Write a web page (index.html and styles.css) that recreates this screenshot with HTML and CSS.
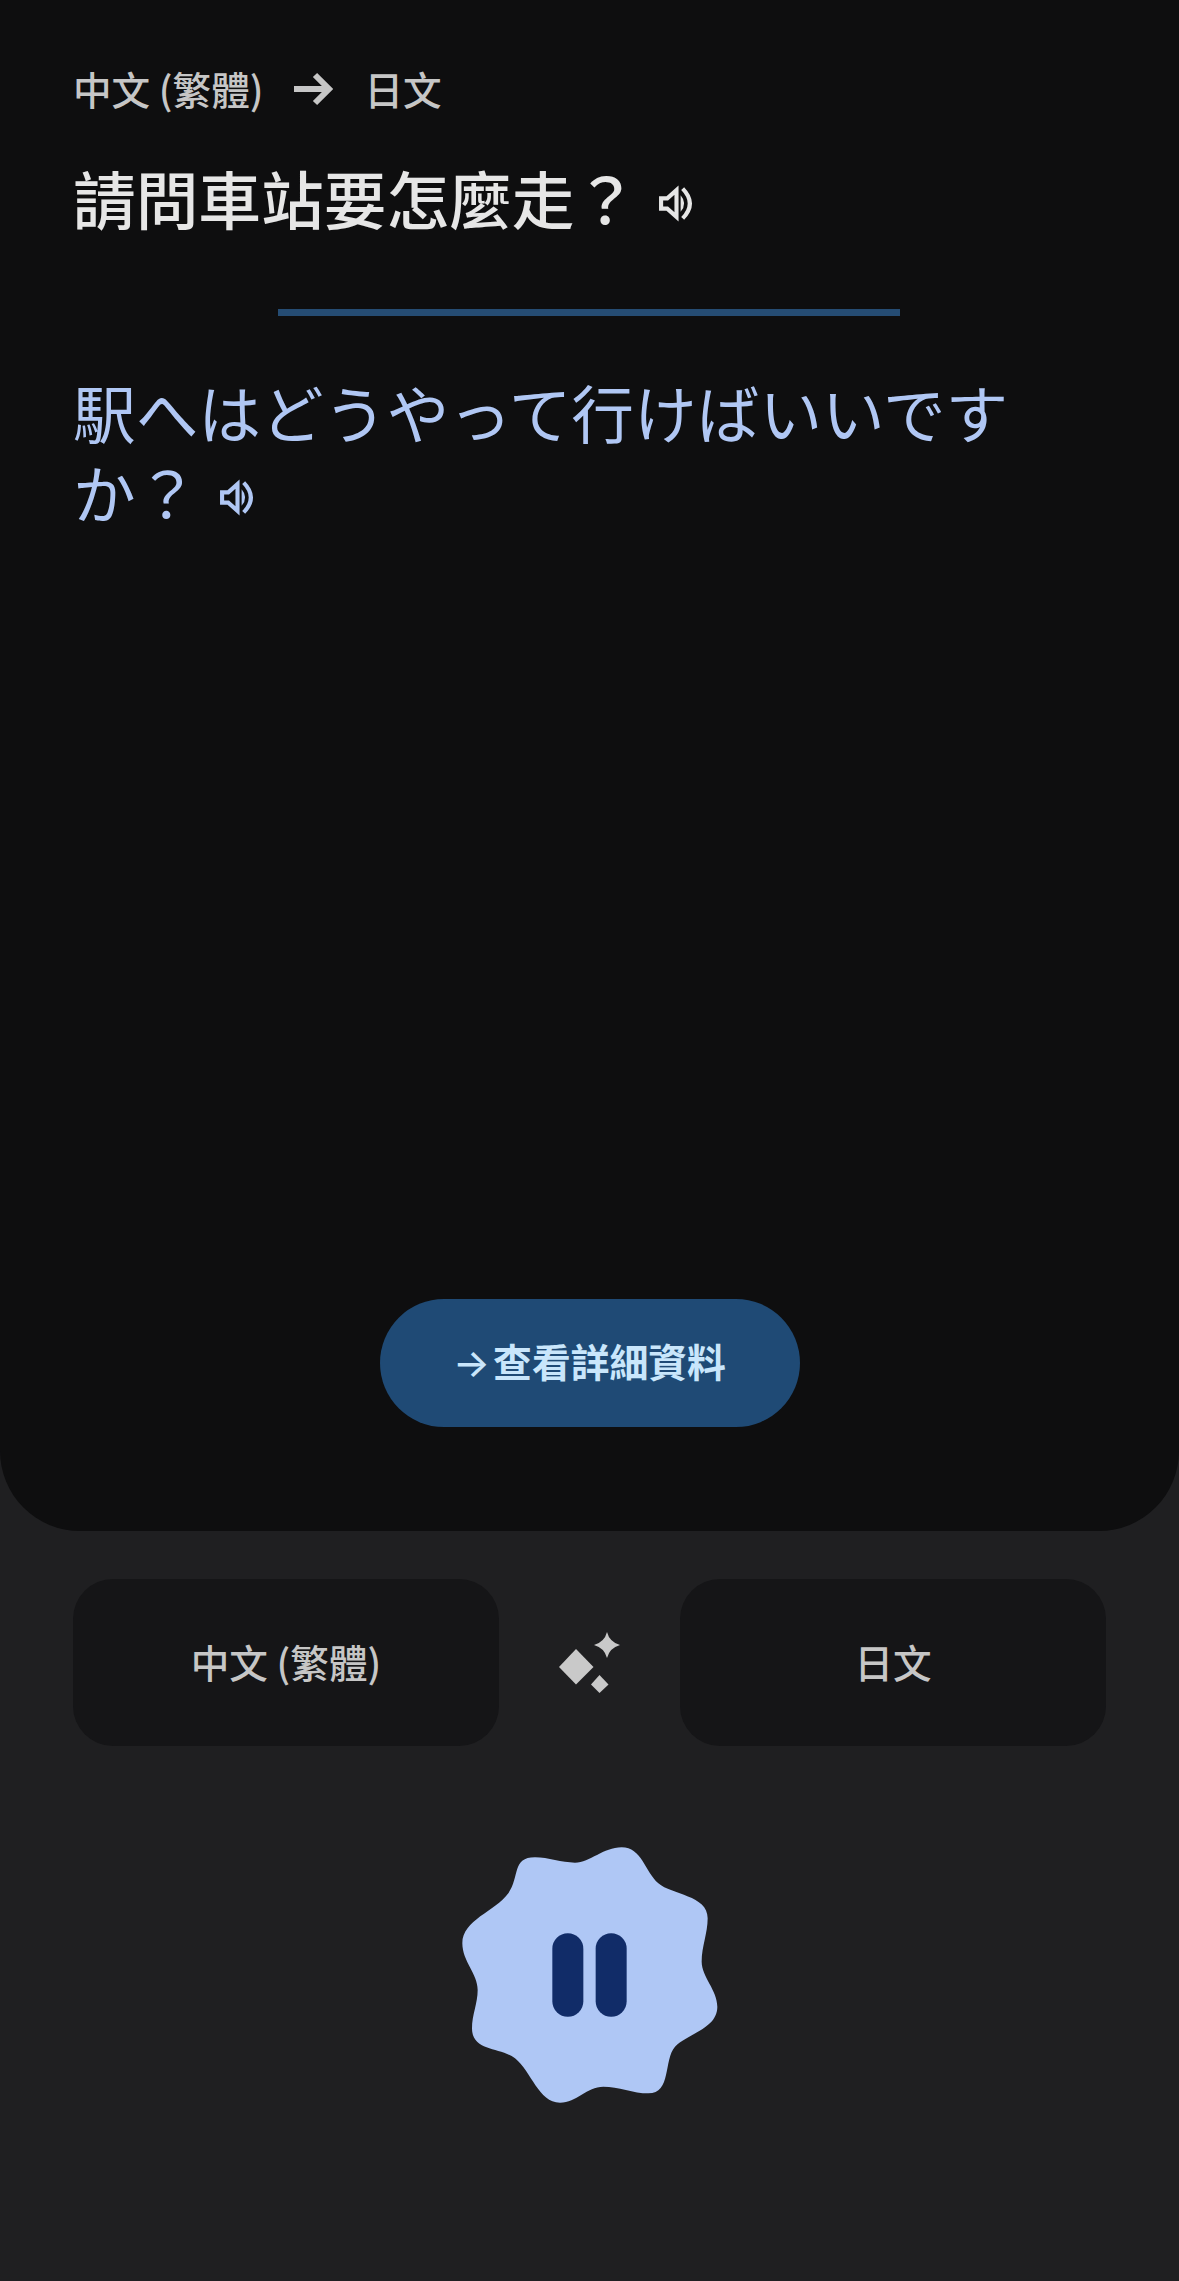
FILE: index.html
```html
<!DOCTYPE html>
<html lang="zh-Hant">
<head>
<meta charset="utf-8">
<title>翻譯</title>
<link rel="stylesheet" href="styles.css">
</head>
<body>
<main class="screen">
  <section class="panel">
    <div class="route">
      <span>中文 (繁體)</span>
      <svg class="route-arrow" viewBox="0 0 40 36"><path d="M1 18H36M22 4L36 18L22 32" fill="none" stroke="currentColor" stroke-width="6"/></svg>
      <span>日文</span>
    </div>
    <p class="source">請問車站要怎麼走？<svg class="speak" viewBox="0 0 36 36"><path d="M3 13H9L18 5V31L9 23H3Z" fill="none" stroke="currentColor" stroke-width="4" stroke-linejoin="miter"/><path d="M22 10Q29 18 22 26Z" fill="currentColor"/><path d="M24 3.500Q38 18 24 32.500" fill="none" stroke="currentColor" stroke-width="4"/></svg></p>
    <div class="rule"></div>
    <p class="target" lang="ja">駅へはどうやって行けばいいですか？<svg class="speak" viewBox="0 0 36 36"><path d="M3 13H9L18 5V31L9 23H3Z" fill="none" stroke="currentColor" stroke-width="4" stroke-linejoin="miter"/><path d="M22 10Q29 18 22 26Z" fill="currentColor"/><path d="M24 3.500Q38 18 24 32.500" fill="none" stroke="currentColor" stroke-width="4"/></svg></p>
    <button class="details"><span class="details-arrow">→</span>查看詳細資料</button>
  </section>
  <section class="langs">
    <div class="lang">中文 (繁體)</div>
    <svg class="sparkle" viewBox="0 0 120 120"><path d="M46 49L63.500 67L46 84.500L29 67Z" fill="currentColor"/><path d="M69.500 75L78.500 84.500L69.500 93L61 84.500Z" fill="currentColor"/><path d="M77 32Q79.500 42 90 45Q79.500 48 77 58Q74.500 48 64 45Q74.500 42 77 32Z" fill="currentColor"/></svg>
    <div class="lang">日文</div>
  </section>
  <div class="controls">
    <button class="pause" aria-label="暫停">
      <svg class="blob" viewBox="0 0 900 840"><path class="blob-shape" d="M405 98C450 98 490 52 545 52C605 52 615 125 655 160C695 195 803 195 803 265C803 310 785 350 785 395C785 440 832 480 832 530C832 595 745 610 705 650C670 690 695 790 625 790C580 790 535 770 490 770C440 770 410 818 360 818C295 818 275 725 225 685C180 650 96 665 96 595C96 555 113 520 113 480C113 430 67 395 67 340C67 270 165 245 205 190C240 140 215 82 285 82C325 82 365 98 405 98Z"/><rect class="blob-bar" x="337" y="310" width="93" height="250" rx="46.500"/><rect class="blob-bar" x="467" y="310" width="93" height="250" rx="46.500"/></svg>
    </button>
  </div>
</main>
</body>
</html>
```
FILE: styles.css
```css
* { box-sizing: border-box; }
html, body { margin: 0; padding: 0; }
body {
  width: 1179px;
  height: 2281px;
  overflow: hidden;
  background: #1f1f21;
  font-family: "Noto Sans CJK TC", "Noto Sans CJK JP", "Noto Sans", sans-serif;
}
.screen { display: flex; flex-direction: column; height: 2281px; }
.panel {
  height: 1531px;
  padding: 0 73px 104px;
  display: flex;
  flex-direction: column;
  background: #0e0e0f;
  border-radius: 0 0 80px 80px;
}
.route {
  display: flex;
  align-items: center;
  height: 60px;
  margin-top: 58px;
  font-size: 38.600px;
  font-weight: 500;
  color: #c6c6c6;
}
.route-arrow { width: 40px; height: 36px; margin: 2px 31px 0 30px; }
.source {
  margin: 39px 0 0;
  font-size: 62.700px;
  line-height: 80px;
  font-weight: 500;
  color: #e6e6e6;
}
.target {
  margin: 55px 0 0;
  width: 960px;
  font-size: 62.700px;
  line-height: 80px;
  font-weight: 400;
  color: #b0c7f4;
}
.speak { width: 37px; height: 37px; margin-left: 21px; vertical-align: 2px; }
.rule { width: 622px; height: 7px; margin: 72px 0 0 205px; background: #254c73; }
.details {
  width: 420px;
  height: 128px;
  margin: auto auto 0;
  padding: 0 0 6px;
  border: 0;
  border-radius: 64px;
  background: #1f4a75;
  color: #c9e6fb;
  font-family: inherit;
  font-size: 38.800px;
  font-weight: 700;
}
.details-arrow { font-family: "Inter", sans-serif; font-weight: 500; margin-right: 3px; }
.langs {
  display: flex;
  justify-content: space-between;
  align-items: center;
  margin: 48px 73px 0;
}
.lang {
  width: 426px;
  height: 167px;
  padding-bottom: 4px;
  display: flex;
  align-items: center;
  justify-content: center;
  border-radius: 40px;
  background: #151517;
  font-size: 38.600px;
  font-weight: 500;
  color: #c6c6c6;
}
.sparkle { width: 120px; height: 120px; margin-bottom: 6px; color: #c9c9c9; }
.controls { display: flex; justify-content: center; margin-top: 84px; }
.pause { width: 300px; height: 280px; border: 0; padding: 0; background: none; }
.blob { display: block; width: 300px; height: 280px; }
.blob-shape { fill: #afc7f5; }
.blob-bar { fill: #112c68; }
```
